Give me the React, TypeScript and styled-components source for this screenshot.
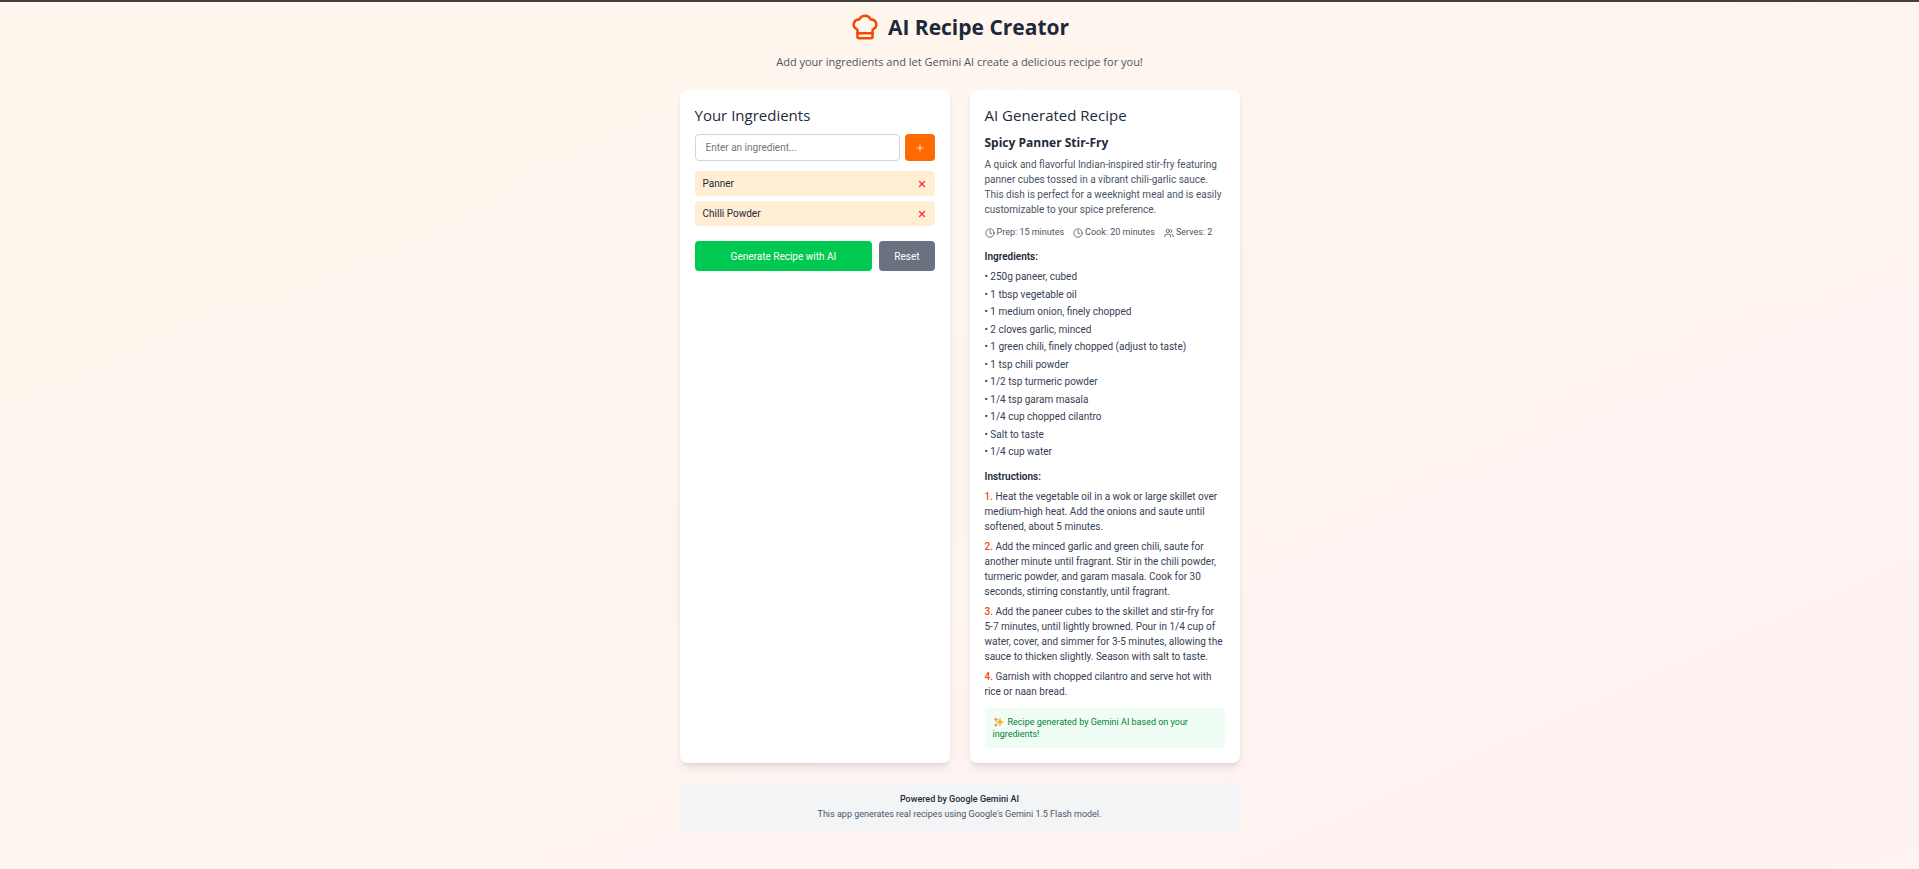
import React, { useState } from "react";
import styled, { createGlobalStyle } from "styled-components";
import { ChefHat, Clock, Plus, Users, X } from "lucide-react";

const headingFont = `"Segoe UI", "Open Sans", "Noto Sans", sans-serif`;
const bodyFont = `"Segoe UI", Roboto, "Open Sans", sans-serif`;

const GlobalStyle = createGlobalStyle`
  *, *::before, *::after { box-sizing: border-box; }
  body {
    margin: 0;
    font-family: ${bodyFont};
    font-size: 10px;
    line-height: 15px;
    color: #1e2939;
  }
  h1, h2, h3, h4, p, ul, ol { margin: 0; padding: 0; }
  ul, ol { list-style: none; }
  button, input { font: inherit; }
  button { border: 0; padding: 0; cursor: pointer; }
  svg { display: block; flex: none; }
`;

const Page = styled.div`
  min-height: 100vh;
  padding: 10px 20px 20px;
  border-top: 2px solid #404040;
  background: linear-gradient(to bottom right, #fff7ed, #fef2f2);
`;

const Container = styled.div`
  max-width: 560px;
  margin: 0 auto;
`;

const Header = styled.header`
  text-align: center;
  margin-bottom: 20px;
`;

const TitleRow = styled.div`
  display: flex;
  align-items: center;
  justify-content: center;
  gap: 8px;
  margin-bottom: 11px;
  color: #f54900;
`;

const Title = styled.h1`
  font-family: ${headingFont};
  font-size: 21px;
  line-height: 30px;
  font-weight: 700;
  color: #1e2939;
`;

const Subtitle = styled.p`
  font-family: ${headingFont};
  font-size: 11px;
  line-height: 17px;
  color: #4a5565;
`;

const Columns = styled.main`
  display: grid;
  grid-template-columns: repeat(2, minmax(0, 1fr));
  gap: 20px;
`;

const Card = styled.section`
  padding: 15px;
  border-radius: 7px;
  background: #fff;
  box-shadow: 0 6px 9px -2px rgba(0, 0, 0, 0.1), 0 2px 4px -2px rgba(0, 0, 0, 0.1);
`;

const CardTitle = styled.h2`
  font-family: ${headingFont};
  font-size: 15px;
  line-height: 20px;
  font-weight: 500;
  margin-bottom: 9px;
`;

const AddForm = styled.form`
  display: flex;
  gap: 5px;
  margin-bottom: 10px;
`;

const TextField = styled.input`
  flex: 1;
  min-width: 0;
  height: 27px;
  padding: 0 10px;
  border: 1px solid #d1d5dc;
  border-radius: 4px;
  background: #fff;
  color: #1e2939;
  &::placeholder { color: #757575; opacity: 1; }
`;

const AddButton = styled.button`
  display: flex;
  align-items: center;
  justify-content: center;
  width: 30px;
  border-radius: 4px;
  background: #ff6900;
  color: #fff;
`;

const Chips = styled.ul`
  display: grid;
  gap: 5px;
  margin-bottom: 15px;
`;

const Chip = styled.li`
  display: flex;
  align-items: center;
  justify-content: space-between;
  padding: 5px 8px;
  border-radius: 4px;
  background: #ffedd4;
`;

const RemoveButton = styled.button`
  background: none;
  color: #fb2c36;
`;

const Actions = styled.div`
  display: flex;
  gap: 7px;
`;

const ActionButton = styled.button<{ $tone: "primary" | "muted" }>`
  flex: ${({ $tone }) => ($tone === "primary" ? "1" : "none")};
  padding: 8px 15px 7px;
  border-radius: 4px;
  background: ${({ $tone }) => ($tone === "primary" ? "#00c951" : "#6a7282")};
  color: #fff;
`;

const RecipeName = styled.h3`
  font-family: ${headingFont};
  font-size: 12px;
  line-height: 18px;
  font-weight: 700;
  margin-bottom: 5px;
`;

const Description = styled.p`
  color: #4a5565;
  margin-bottom: 9px;
`;

const Meta = styled.ul`
  display: flex;
  gap: 9px;
  margin-bottom: 10px;
  font-size: 9px;
  line-height: 13px;
  color: #4a5565;
  white-space: nowrap;
`;

const MetaItem = styled.li`
  display: flex;
  align-items: center;
  gap: 2px;
`;

const SectionTitle = styled.h4`
  font-size: 10px;
  line-height: 15px;
  font-weight: 600;
  margin-bottom: 5px;
`;

const IngredientList = styled.ul`
  margin-bottom: 10px;
  color: #364153;
`;

const Ingredient = styled.li`
  &:nth-child(odd) { margin-bottom: 3px; }
  &:nth-child(even) { margin-bottom: 2px; }
  &:last-child { margin-bottom: 0; }
`;

const Steps = styled.ol`
  display: grid;
  gap: 5px;
  margin-bottom: 9px;
  color: #364153;
`;

const StepNumber = styled.span`
  font-weight: 500;
  color: #f54900;
`;

const Note = styled.p`
  padding: 8px;
  border-radius: 4px;
  background: #f0fdf4;
  color: #008236;
  font-size: 9px;
  line-height: 12px;
`;

const Sparkle = styled.svg`
  display: inline-block;
  vertical-align: -2px;
  margin: 0 4px 0 1px;
`;

const Footer = styled.footer`
  margin-top: 20px;
  padding: 9px 10px;
  border-radius: 4px;
  background: #f3f4f6;
  text-align: center;
  font-size: 9px;
  line-height: 15px;
  color: #4a5565;
`;

const FooterTitle = styled.p`
  font-weight: 500;
  color: #1e2939;
`;

const ingredients = [
  "250g paneer, cubed",
  "1 tbsp vegetable oil",
  "1 medium onion, finely chopped",
  "2 cloves garlic, minced",
  "1 green chili, finely chopped (adjust to taste)",
  "1 tsp chili powder",
  "1/2 tsp turmeric powder",
  "1/4 tsp garam masala",
  "1/4 cup chopped cilantro",
  "Salt to taste",
  "1/4 cup water",
];

const steps = [
  "Heat the vegetable oil in a wok or large skillet over medium-high heat. Add the onions and saute until softened, about 5 minutes.",
  "Add the minced garlic and green chili, saute for another minute until fragrant. Stir in the chili powder, turmeric powder, and garam masala. Cook for 30 seconds, stirring constantly, until fragrant.",
  "Add the paneer cubes to the skillet and stir-fry for 5-7 minutes, until lightly browned. Pour in 1/4 cup of water, cover, and simmer for 3-5 minutes, allowing the sauce to thicken slightly. Season with salt to taste.",
  "Garnish with chopped cilantro and serve hot with rice or naan bread.",
];

export default function App() {
  const [items, setItems] = useState(["Panner", "Chilli Powder"]);
  const [draft, setDraft] = useState("");

  const addItem = (event: React.FormEvent) => {
    event.preventDefault();
    const value = draft.trim();
    if (value) {
      setItems([...items, value]);
      setDraft("");
    }
  };

  return (
    <>
      <GlobalStyle />
      <Page>
        <Container>
          <Header>
            <TitleRow>
              <ChefHat size={30} />
              <Title>AI Recipe Creator</Title>
            </TitleRow>
            <Subtitle>Add your ingredients and let Gemini AI create a delicious recipe for you!</Subtitle>
          </Header>

          <Columns>
            <Card>
              <CardTitle>Your Ingredients</CardTitle>
              <AddForm onSubmit={addItem}>
                <TextField
                  type="text"
                  aria-label="Ingredient"
                  placeholder="Enter an ingredient..."
                  value={draft}
                  onChange={(event) => setDraft(event.target.value)}
                />
                <AddButton type="submit" aria-label="Add ingredient">
                  <Plus size={10} />
                </AddButton>
              </AddForm>
              <Chips>
                {items.map((item) => (
                  <Chip key={item}>
                    {item}
                    <RemoveButton
                      type="button"
                      aria-label={`Remove ${item}`}
                      onClick={() => setItems(items.filter((other) => other !== item))}
                    >
                      <X size={10} strokeWidth={3} />
                    </RemoveButton>
                  </Chip>
                ))}
              </Chips>
              <Actions>
                <ActionButton type="button" $tone="primary">Generate Recipe with AI</ActionButton>
                <ActionButton type="button" $tone="muted" onClick={() => setItems([])}>Reset</ActionButton>
              </Actions>
            </Card>

            <Card>
              <CardTitle>AI Generated Recipe</CardTitle>
              <RecipeName>Spicy Panner Stir-Fry</RecipeName>
              <Description>
                A quick and flavorful Indian-inspired stir-fry featuring panner cubes tossed in a vibrant
                chili-garlic sauce. This dish is perfect for a weeknight meal and is easily customizable to
                your spice preference.
              </Description>
              <Meta>
                <MetaItem><Clock size={10} />Prep: 15 minutes</MetaItem>
                <MetaItem><Clock size={10} />Cook: 20 minutes</MetaItem>
                <MetaItem><Users size={10} />Serves: 2</MetaItem>
              </Meta>
              <SectionTitle>Ingredients:</SectionTitle>
              <IngredientList>
                {ingredients.map((text) => (
                  <Ingredient key={text}>• {text}</Ingredient>
                ))}
              </IngredientList>
              <SectionTitle>Instructions:</SectionTitle>
              <Steps>
                {steps.map((text, index) => (
                  <li key={text}>
                    <StepNumber>{index + 1}.</StepNumber> {text}
                  </li>
                ))}
              </Steps>
              <Note>
                <Sparkle width="10" height="10" viewBox="0 0 20 20" aria-hidden="true">
                  <path d="M12 1l2.500 6.500 6 2.500-6 2.500-2.500 6.500-2.500-6.500-6-2.500 6-2.500z" fill="#ffa930" />
                  <path d="M4 0l1.500 3.500 3.500 1.500-3.500 1.500-1.500 3.500-1.500-3.500-3-1.500 3-1.500zM4 12l1.500 2.500 2.500 1.500-2.500 1.500-1.500 2.500-1.500-2.500-2.500-1.500 2.500-1.500z" fill="#ff8a4c" />
                </Sparkle>
                Recipe generated by Gemini AI based on your ingredients!
              </Note>
            </Card>
          </Columns>

          <Footer>
            <FooterTitle>Powered by Google Gemini AI</FooterTitle>
            <p>This app generates real recipes using Google's Gemini 1.5 Flash model.</p>
          </Footer>
        </Container>
      </Page>
    </>
  );
}
